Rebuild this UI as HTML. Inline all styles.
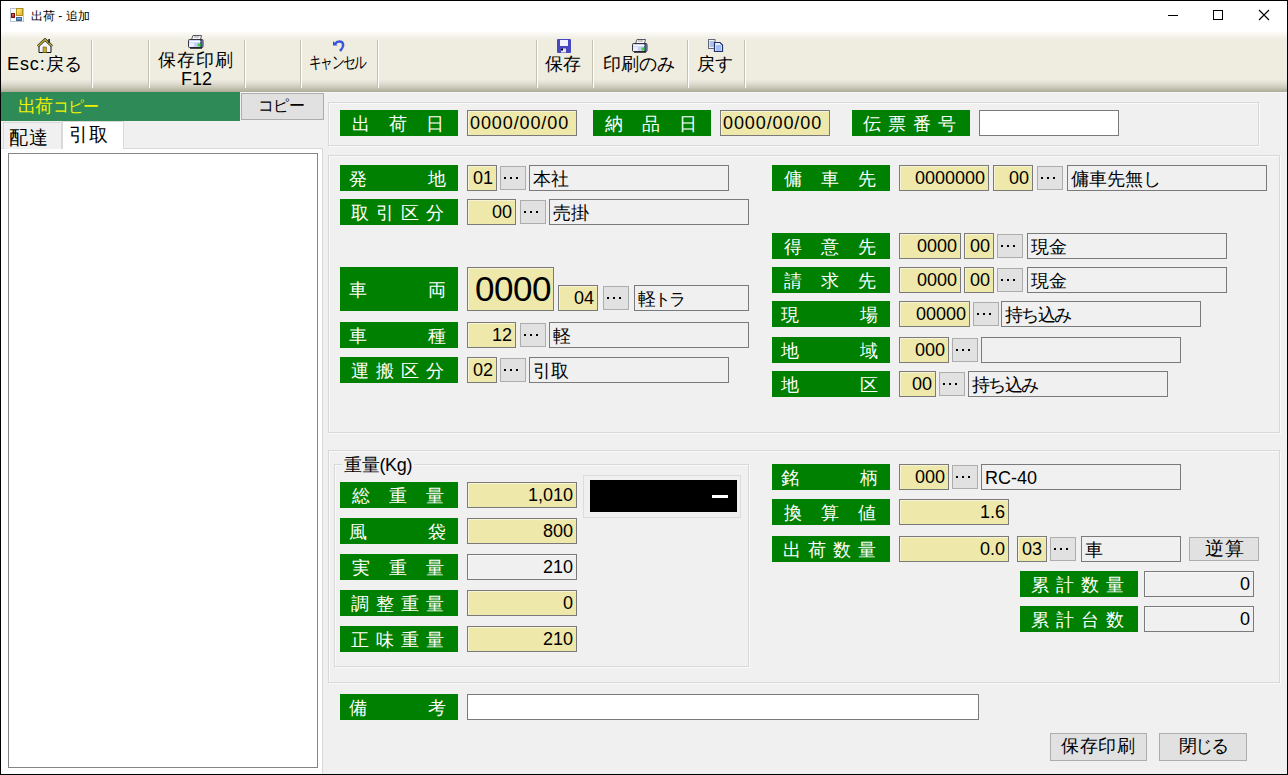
<!DOCTYPE html><html><head><meta charset="utf-8"><title>出荷 - 追加</title><style>
*{margin:0;padding:0;box-sizing:border-box}
html,body{width:1288px;height:775px;overflow:hidden;background:#f0f0f0;font-family:"Liberation Sans",sans-serif}
#w{position:absolute;left:0;top:0;width:1288px;height:775px;background:#f0f0f0}
div{position:absolute}
.t{white-space:nowrap;color:#000}
.lb{background:#008000;color:#fff;font-size:18px}
.lb span{position:absolute;line-height:28px;white-space:nowrap}
.in{border:1px solid #7a7a7a;font-size:18px;line-height:24px;padding:0 3px 0 4px;white-space:nowrap;color:#000;box-shadow:inset 1px 1px 0 rgba(255,255,255,.5)}
.tb{border:1px solid #7a7a7a;font-size:18px;line-height:26px;padding:0 0 0 3px;white-space:nowrap;color:#000}
.db{width:26px;height:24px;background:#e1e1e1;border:1px solid #adadad}
.db i{position:absolute;top:10px;width:2px;height:2px;background:#000}
.bt{background:#e1e1e1;border:1px solid #adadad;text-align:center;white-space:nowrap;color:#000}
.grp{border:1px solid #dcdcdc}
.sep{width:2px;border-left:1px solid #cfccbf;border-right:1px solid #fff}
.tbl{font-size:18px;color:#000;white-space:nowrap;text-align:center}
</style></head><body><div id="w">
<div style="left:1px;top:1px;width:1286px;height:31px;background:#fff"></div>
<div style="left:10px;top:8px;width:14px;height:14px;background:#fff;border:1px solid #b8c4d4"></div>
<div style="left:16px;top:8px;width:7px;height:8px;background:linear-gradient(135deg,#fff27a,#f0b020);border:1px solid #b09020"></div>
<div style="left:11px;top:13px;width:4px;height:5px;background:linear-gradient(135deg,#f08070,#a01010);border:1px solid #801010"></div>
<div style="left:16px;top:17px;width:6px;height:4px;background:linear-gradient(#90c0f0,#3070b0);border:1px solid #406890"></div>
<div class="t" style="left:31px;top:8px;font-size:12px;line-height:16px;color:#000">出荷 - 追加</div>
<div style="left:1168px;top:15px;width:10px;height:1px;background:#000"></div>
<div style="left:1213px;top:10px;width:10px;height:10px;border:1px solid #000"></div>
<svg style="position:absolute;left:1258px;top:9px" width="12" height="12"><path d="M1 1L11 11M11 1L1 11" stroke="#000" stroke-width="1.1"/></svg>
<div style="left:1px;top:32px;width:1286px;height:60px;background:linear-gradient(#fcfbf8 0px,#f3f1e8 5px,#efece0 9px,#efece0 47px,#e2e0d4 51px,#cdccbc 55px,#b2b19e 59px,#aeae9a 60px)"></div>
<div style="left:1px;top:92px;width:1286px;height:1px;background:#f7f7f7"></div>
<div style="left:91px;top:40px;width:2px;height:48px;border-left:1px solid #c4c1b3;border-right:1px solid #fff"></div>
<div style="left:148px;top:40px;width:2px;height:48px;border-left:1px solid #c4c1b3;border-right:1px solid #fff"></div>
<div style="left:244px;top:40px;width:2px;height:48px;border-left:1px solid #c4c1b3;border-right:1px solid #fff"></div>
<div style="left:300px;top:40px;width:2px;height:48px;border-left:1px solid #c4c1b3;border-right:1px solid #fff"></div>
<div style="left:377px;top:40px;width:2px;height:48px;border-left:1px solid #c4c1b3;border-right:1px solid #fff"></div>
<div style="left:536px;top:40px;width:2px;height:48px;border-left:1px solid #c4c1b3;border-right:1px solid #fff"></div>
<div style="left:592px;top:40px;width:2px;height:48px;border-left:1px solid #c4c1b3;border-right:1px solid #fff"></div>
<div style="left:687px;top:40px;width:2px;height:48px;border-left:1px solid #c4c1b3;border-right:1px solid #fff"></div>
<div style="left:744px;top:40px;width:2px;height:48px;border-left:1px solid #c4c1b3;border-right:1px solid #fff"></div>
<svg style="position:absolute;left:37px;top:38px" width="16" height="16" viewBox="0 0 16 16">
<path d="M2 7.5V14.5H14V7.5L8 2Z" fill="#f4f4fc" stroke="#111" stroke-width="1"/>
<rect x="6" y="9" width="3.5" height="5.5" fill="#c8a828" stroke="#6a5a10" stroke-width="0.6"/>
<path d="M0.8 8.2L8 1.5L15.2 8.2" fill="none" stroke="#2a2a10" stroke-width="2.6"/>
<path d="M0.8 8.2L8 1.5L15.2 8.2" fill="none" stroke="#c8b840" stroke-width="1.2"/>
<rect x="11.2" y="1" width="1.8" height="4" fill="#333"/>
</svg>
<svg style="position:absolute;left:188px;top:35px" width="16" height="14" viewBox="0 0 16 14">

<path d="M3.5 4.5L5 0.5H13.5L12.5 4.5Z" fill="#f8f8f0" stroke="#556" stroke-width="1"/>
<path d="M6 2H11" stroke="#889" stroke-width="0.8"/>
<rect x="0.5" y="4.5" width="14.5" height="8" rx="1" fill="#c8d0f4" stroke="#334" stroke-width="1"/><rect x="12" y="5" width="2.5" height="7" fill="#405878"/><rect x="1" y="8" width="5" height="4" fill="#eeeeff"/>
<rect x="1.5" y="6" width="11" height="1.2" fill="#fff"/>
<rect x="9.5" y="8.5" width="3" height="3" fill="#40d040"/>
<rect x="2" y="12.3" width="12" height="1.5" fill="#222"/>
</svg>
<svg style="position:absolute;left:632px;top:39px" width="16" height="14" viewBox="0 0 16 14">

<path d="M3.5 4.5L5 0.5H13.5L12.5 4.5Z" fill="#f8f8f0" stroke="#556" stroke-width="1"/>
<path d="M6 2H11" stroke="#889" stroke-width="0.8"/>
<rect x="0.5" y="4.5" width="14.5" height="8" rx="1" fill="#c8d0f4" stroke="#334" stroke-width="1"/><rect x="12" y="5" width="2.5" height="7" fill="#405878"/><rect x="1" y="8" width="5" height="4" fill="#eeeeff"/>
<rect x="1.5" y="6" width="11" height="1.2" fill="#fff"/>
<rect x="9.5" y="8.5" width="3" height="3" fill="#40d040"/>
<rect x="2" y="12.3" width="12" height="1.5" fill="#222"/>
</svg>
<svg style="position:absolute;left:332px;top:39px" width="14" height="13" viewBox="0 0 14 13">
<path d="M1 2V6.5H5.5Z" fill="#3050d0"/>
<path d="M3 5C5 2 10 1.5 11 5C12 8 9.5 10 8 12" fill="none" stroke="#3a5ad8" stroke-width="2.4"/>
</svg>
<svg style="position:absolute;left:557px;top:39px" width="14" height="14" viewBox="0 0 14 14">
<rect x="0" y="0" width="14" height="14" rx="1" fill="#4848c0"/>
<rect x="3" y="1" width="8" height="6" fill="#f0f4ff"/>
<rect x="4" y="9.5" width="5" height="4" fill="#e8e8f0"/>
<rect x="4" y="9.5" width="2" height="2" fill="#000"/>
</svg>
<svg style="position:absolute;left:708px;top:39px" width="16" height="14" viewBox="0 0 16 14">
<rect x="0.5" y="0.5" width="6.5" height="9" fill="#eef6ff" stroke="#667" stroke-width="1"/>
<path d="M1.5 3H6M1.5 5H6M1.5 7H6" stroke="#7090d0" stroke-width="1"/>
<path d="M6.5 3.5H12L14.5 6V12.5H6.5Z" fill="#e8f4ff" stroke="#223070" stroke-width="1.2"/>
<path d="M8 7H13M8 9H13M8 11H13" stroke="#6088e0" stroke-width="1"/>
</svg>
<div class="t" style="left:7px;top:54px;font-size:18px;line-height:20px"><span style="letter-spacing:0.9px">Esc:</span>戻る</div>
<div class="t" style="left:158px;top:50px;font-size:18px;line-height:20px;letter-spacing:1px">保存印刷</div>
<div class="t" style="left:181px;top:69px;font-size:18px;line-height:20px">F12</div>
<div class="t" style="left:309px;top:53px;font-size:17px;line-height:20px;letter-spacing:-2px"><span style="display:inline-block;transform:scaleX(0.75);transform-origin:0 0">キャンセル</span></div>
<div class="t" style="left:545px;top:54px;font-size:18px;line-height:20px">保存</div>
<div class="t" style="left:603px;top:54px;font-size:18px;line-height:20px">印刷のみ</div>
<div class="t" style="left:697px;top:54px;font-size:18px;line-height:20px">戻す</div>
<div style="left:1px;top:92px;width:239px;height:29px;background:#2e8b57"></div>
<div class="t" style="left:18px;top:96px;font-size:18px;line-height:20px;color:#f0f000;letter-spacing:-1px">出荷<span style="letter-spacing:-1px;font-size:15.5px;margin-left:1px">コピー</span></div>
<div class="bt" style="left:241px;top:93px;width:83px;height:27px;line-height:24px;font-size:15.5px"><span style="letter-spacing:-0.5px;margin-left:-3px">コピー</span></div>
<div style="left:1px;top:148px;width:322px;height:626px;background:#fff;border-right:1px solid #d9d9d9;border-top:1px solid #d9d9d9"></div>
<div style="left:3px;top:122px;width:59px;height:27px;background:#f0f0f0;border:1px solid #d9d9d9;border-bottom:none"></div>
<div style="left:62px;top:121px;width:62px;height:28px;background:#fff;border:1px solid #d9d9d9;border-bottom:none"></div>
<div class="t" style="left:9px;top:128px;font-size:19px;line-height:20px;letter-spacing:0.5px">配達</div>
<div class="t" style="left:69px;top:125px;font-size:19px;line-height:20px;letter-spacing:0.5px">引取</div>
<div style="left:8px;top:153px;width:310px;height:615px;background:#fff;border:1px solid #858585"></div>
<div style="left:328px;top:102px;width:931px;height:44px;border:1px solid #d8d8d8;box-shadow:inset 1px 1px 0 #fafafa,1px 1px 0 #fafafa"></div>
<div style="left:328px;top:155px;width:952px;height:278px;border:1px solid #d8d8d8;box-shadow:inset 1px 1px 0 #fafafa,1px 1px 0 #fafafa"></div>
<div style="left:328px;top:450px;width:952px;height:233px;border:1px solid #d8d8d8;box-shadow:inset 1px 1px 0 #fafafa,1px 1px 0 #fafafa"></div>
<div style="left:334px;top:464px;width:415px;height:203px;border:1px solid #d8d8d8;box-shadow:inset 1px 1px 0 #fafafa,1px 1px 0 #fafafa"></div>
<div style="left:342px;top:456px;width:72px;height:18px;background:#f0f0f0"></div>
<div class="t" style="left:344px;top:455px;font-size:18px;line-height:20px;letter-spacing:-0.3px">重量(Kg)</div>
<div class="lb" style="left:340px;top:110px;width:118px;height:26px">
<span style="left:12px;top:0px">出</span>
<span style="left:49px;top:0px">荷</span>
<span style="left:86px;top:0px">日</span>
</div>
<div class="in" style="left:467px;top:110px;width:110px;height:26px;background:#eee8aa;text-align:left"><span style="letter-spacing:0.9px;margin-left:-2px">0000/00/00</span></div>
<div class="lb" style="left:593px;top:110px;width:118px;height:26px">
<span style="left:12px;top:0px">納</span>
<span style="left:49px;top:0px">品</span>
<span style="left:86px;top:0px">日</span>
</div>
<div class="in" style="left:720px;top:110px;width:110px;height:26px;background:#eee8aa;text-align:left"><span style="letter-spacing:0.9px;margin-left:-2px">0000/00/00</span></div>
<div class="lb" style="left:852px;top:110px;width:118px;height:26px">
<span style="left:11px;top:0px">伝</span>
<span style="left:36px;top:0px">票</span>
<span style="left:61px;top:0px">番</span>
<span style="left:86px;top:0px">号</span>
</div>
<div class="in" style="left:979px;top:110px;width:140px;height:26px;background:#fff;text-align:left"></div>
<div class="lb" style="left:340px;top:165px;width:118px;height:26px">
<span style="left:9px;top:0px">発</span>
<span style="left:88px;top:0px">地</span>
</div>
<div class="in" style="left:467px;top:165px;width:30px;height:26px;background:#eee8aa;text-align:left"><span style="margin-left:1px">01</span></div>
<div class="db" style="left:500px;top:166px"><i style="left:3px"></i><i style="left:9px"></i><i style="left:15px"></i></div>
<div class="tb" style="left:529px;top:165px;width:200px;height:26px;background:#f0f0f0">本社</div>
<div class="lb" style="left:340px;top:199px;width:118px;height:26px">
<span style="left:11px;top:0px">取</span>
<span style="left:36px;top:0px">引</span>
<span style="left:61px;top:0px">区</span>
<span style="left:86px;top:0px">分</span>
</div>
<div class="in" style="left:467px;top:199px;width:49px;height:26px;background:#eee8aa;text-align:right">00</div>
<div class="db" style="left:520px;top:200px"><i style="left:3px"></i><i style="left:9px"></i><i style="left:15px"></i></div>
<div class="tb" style="left:549px;top:199px;width:200px;height:26px;background:#f0f0f0">売掛</div>
<div class="lb" style="left:340px;top:267px;width:118px;height:44px">
<span style="left:9px;top:9px">車</span>
<span style="left:88px;top:9px">両</span>
</div>
<div class="in" style="left:467px;top:267px;width:87px;height:44px;background:#eee8aa;font-size:35px;line-height:42px;padding:0 0 0 7px;letter-spacing:-0.5px">0000</div>
<div class="in" style="left:558px;top:285px;width:40px;height:26px;background:#eee8aa;text-align:right">04</div>
<div class="db" style="left:603px;top:286px"><i style="left:3px"></i><i style="left:9px"></i><i style="left:15px"></i></div>
<div class="tb" style="left:634px;top:285px;width:115px;height:26px;background:#f0f0f0"><span style="letter-spacing:-2px">軽</span><span style="letter-spacing:-2px;font-size:16.5px">トラ</span></div>
<div class="lb" style="left:340px;top:322px;width:118px;height:26px">
<span style="left:9px;top:0px">車</span>
<span style="left:88px;top:0px">種</span>
</div>
<div class="in" style="left:467px;top:322px;width:49px;height:26px;background:#eee8aa;text-align:right">12</div>
<div class="db" style="left:520px;top:323px"><i style="left:3px"></i><i style="left:9px"></i><i style="left:15px"></i></div>
<div class="tb" style="left:549px;top:322px;width:200px;height:26px;background:#f0f0f0">軽</div>
<div class="lb" style="left:340px;top:357px;width:118px;height:26px">
<span style="left:11px;top:0px">運</span>
<span style="left:36px;top:0px">搬</span>
<span style="left:61px;top:0px">区</span>
<span style="left:86px;top:0px">分</span>
</div>
<div class="in" style="left:467px;top:357px;width:30px;height:26px;background:#eee8aa;text-align:left"><span style="margin-left:1px">02</span></div>
<div class="db" style="left:500px;top:358px"><i style="left:3px"></i><i style="left:9px"></i><i style="left:15px"></i></div>
<div class="tb" style="left:529px;top:357px;width:200px;height:26px;background:#f0f0f0">引取</div>
<div class="lb" style="left:772px;top:165px;width:118px;height:26px">
<span style="left:12px;top:0px">傭</span>
<span style="left:49px;top:0px">車</span>
<span style="left:86px;top:0px">先</span>
</div>
<div class="in" style="left:899px;top:165px;width:90px;height:26px;background:#eee8aa;text-align:right">0000000</div>
<div class="in" style="left:993px;top:165px;width:40px;height:26px;background:#eee8aa;text-align:right">00</div>
<div class="db" style="left:1037px;top:166px"><i style="left:3px"></i><i style="left:9px"></i><i style="left:15px"></i></div>
<div class="tb" style="left:1067px;top:165px;width:200px;height:26px;background:#f0f0f0">傭車先無し</div>
<div class="lb" style="left:772px;top:233px;width:118px;height:26px">
<span style="left:12px;top:0px">得</span>
<span style="left:49px;top:0px">意</span>
<span style="left:86px;top:0px">先</span>
</div>
<div class="in" style="left:899px;top:233px;width:62px;height:26px;background:#eee8aa;text-align:right">0000</div>
<div class="in" style="left:964px;top:233px;width:30px;height:26px;background:#eee8aa;text-align:right">00</div>
<div class="db" style="left:997px;top:234px"><i style="left:3px"></i><i style="left:9px"></i><i style="left:15px"></i></div>
<div class="tb" style="left:1027px;top:233px;width:200px;height:26px;background:#f0f0f0">現金</div>
<div class="lb" style="left:772px;top:267px;width:118px;height:26px">
<span style="left:12px;top:0px">請</span>
<span style="left:49px;top:0px">求</span>
<span style="left:86px;top:0px">先</span>
</div>
<div class="in" style="left:899px;top:267px;width:62px;height:26px;background:#eee8aa;text-align:right">0000</div>
<div class="in" style="left:964px;top:267px;width:30px;height:26px;background:#eee8aa;text-align:right">00</div>
<div class="db" style="left:997px;top:268px"><i style="left:3px"></i><i style="left:9px"></i><i style="left:15px"></i></div>
<div class="tb" style="left:1027px;top:267px;width:200px;height:26px;background:#f0f0f0">現金</div>
<div class="lb" style="left:772px;top:301px;width:118px;height:26px">
<span style="left:9px;top:0px">現</span>
<span style="left:88px;top:0px">場</span>
</div>
<div class="in" style="left:899px;top:301px;width:71px;height:26px;background:#eee8aa;text-align:right">00000</div>
<div class="db" style="left:973px;top:302px"><i style="left:3px"></i><i style="left:9px"></i><i style="left:15px"></i></div>
<div class="tb" style="left:1001px;top:301px;width:200px;height:26px;background:#f0f0f0"><span style="letter-spacing:-1.7px">持ち込み</span></div>
<div class="lb" style="left:772px;top:337px;width:118px;height:26px">
<span style="left:9px;top:0px">地</span>
<span style="left:88px;top:0px">域</span>
</div>
<div class="in" style="left:899px;top:337px;width:50px;height:26px;background:#eee8aa;text-align:right">000</div>
<div class="db" style="left:952px;top:338px"><i style="left:3px"></i><i style="left:9px"></i><i style="left:15px"></i></div>
<div class="tb" style="left:981px;top:337px;width:200px;height:26px;background:#f0f0f0"></div>
<div class="lb" style="left:772px;top:371px;width:118px;height:26px">
<span style="left:9px;top:0px">地</span>
<span style="left:88px;top:0px">区</span>
</div>
<div class="in" style="left:899px;top:371px;width:37px;height:26px;background:#eee8aa;text-align:right">00</div>
<div class="db" style="left:939px;top:372px"><i style="left:3px"></i><i style="left:9px"></i><i style="left:15px"></i></div>
<div class="tb" style="left:968px;top:371px;width:200px;height:26px;background:#f0f0f0"><span style="letter-spacing:-1.7px">持ち込み</span></div>
<div class="lb" style="left:340px;top:482px;width:118px;height:26px">
<span style="left:12px;top:0px">総</span>
<span style="left:49px;top:0px">重</span>
<span style="left:86px;top:0px">量</span>
</div>
<div class="in" style="left:467px;top:482px;width:110px;height:26px;background:#eee8aa;text-align:right">1,010</div>
<div class="lb" style="left:340px;top:518px;width:118px;height:26px">
<span style="left:9px;top:0px">風</span>
<span style="left:88px;top:0px">袋</span>
</div>
<div class="in" style="left:467px;top:518px;width:110px;height:26px;background:#eee8aa;text-align:right">800</div>
<div class="lb" style="left:340px;top:554px;width:118px;height:26px">
<span style="left:12px;top:0px">実</span>
<span style="left:49px;top:0px">重</span>
<span style="left:86px;top:0px">量</span>
</div>
<div class="in" style="left:467px;top:554px;width:110px;height:26px;background:#f0f0f0;text-align:right">210</div>
<div class="lb" style="left:340px;top:590px;width:118px;height:26px">
<span style="left:11px;top:0px">調</span>
<span style="left:36px;top:0px">整</span>
<span style="left:61px;top:0px">重</span>
<span style="left:86px;top:0px">量</span>
</div>
<div class="in" style="left:467px;top:590px;width:110px;height:26px;background:#eee8aa;text-align:right">0</div>
<div class="lb" style="left:340px;top:626px;width:118px;height:26px">
<span style="left:11px;top:0px">正</span>
<span style="left:36px;top:0px">味</span>
<span style="left:61px;top:0px">重</span>
<span style="left:86px;top:0px">量</span>
</div>
<div class="in" style="left:467px;top:626px;width:110px;height:26px;background:#eee8aa;text-align:right">210</div>
<div style="left:583px;top:475px;width:158px;height:43px;border:1px solid #dcdcdc"></div>
<div style="left:590px;top:480px;width:147px;height:32px;background:#000"></div>
<div style="left:712px;top:495px;width:16px;height:3px;background:#fff"></div>
<div class="lb" style="left:772px;top:464px;width:118px;height:26px">
<span style="left:9px;top:0px">銘</span>
<span style="left:88px;top:0px">柄</span>
</div>
<div class="in" style="left:899px;top:464px;width:50px;height:26px;background:#eee8aa;text-align:right">000</div>
<div class="db" style="left:952px;top:465px"><i style="left:3px"></i><i style="left:9px"></i><i style="left:15px"></i></div>
<div class="tb" style="left:981px;top:464px;width:200px;height:26px;background:#f0f0f0">RC-40</div>
<div class="lb" style="left:772px;top:499px;width:118px;height:26px">
<span style="left:12px;top:0px">換</span>
<span style="left:49px;top:0px">算</span>
<span style="left:86px;top:0px">値</span>
</div>
<div class="in" style="left:899px;top:499px;width:110px;height:26px;background:#eee8aa;text-align:right">1.6</div>
<div class="lb" style="left:772px;top:536px;width:118px;height:26px">
<span style="left:11px;top:0px">出</span>
<span style="left:36px;top:0px">荷</span>
<span style="left:61px;top:0px">数</span>
<span style="left:86px;top:0px">量</span>
</div>
<div class="in" style="left:899px;top:536px;width:110px;height:26px;background:#eee8aa;text-align:right">0.0</div>
<div class="in" style="left:1017px;top:536px;width:30px;height:26px;background:#eee8aa;text-align:left">03</div>
<div class="db" style="left:1050px;top:537px"><i style="left:3px"></i><i style="left:9px"></i><i style="left:15px"></i></div>
<div class="tb" style="left:1081px;top:536px;width:100px;height:26px;background:#f0f0f0">車</div>
<div class="bt" style="left:1189px;top:537px;width:70px;height:24px;line-height:21px;font-size:19px"><span style="letter-spacing:1px;margin-left:1px">逆算</span></div>
<div class="lb" style="left:1020px;top:571px;width:118px;height:26px">
<span style="left:11px;top:0px">累</span>
<span style="left:36px;top:0px">計</span>
<span style="left:61px;top:0px">数</span>
<span style="left:86px;top:0px">量</span>
</div>
<div class="in" style="left:1144px;top:571px;width:110px;height:26px;background:#f0f0f0;text-align:right">0</div>
<div class="lb" style="left:1020px;top:606px;width:118px;height:26px">
<span style="left:11px;top:0px">累</span>
<span style="left:36px;top:0px">計</span>
<span style="left:61px;top:0px">台</span>
<span style="left:86px;top:0px">数</span>
</div>
<div class="in" style="left:1144px;top:606px;width:110px;height:26px;background:#f0f0f0;text-align:right">0</div>
<div class="lb" style="left:340px;top:694px;width:118px;height:26px">
<span style="left:9px;top:0px">備</span>
<span style="left:88px;top:0px">考</span>
</div>
<div class="in" style="left:467px;top:694px;width:512px;height:26px;background:#fff;text-align:left"></div>
<div class="bt" style="left:1050px;top:733px;width:97px;height:28px;line-height:25px;font-size:18px"><span style="letter-spacing:0.6px">保存印刷</span></div>
<div class="bt" style="left:1159px;top:733px;width:88px;height:28px;line-height:25px;font-size:18px"><span style="letter-spacing:-2px">閉じる</span></div>
<div style="left:0px;top:0px;width:1288px;height:775px;border:1px solid #000"></div>
</div></body></html>
